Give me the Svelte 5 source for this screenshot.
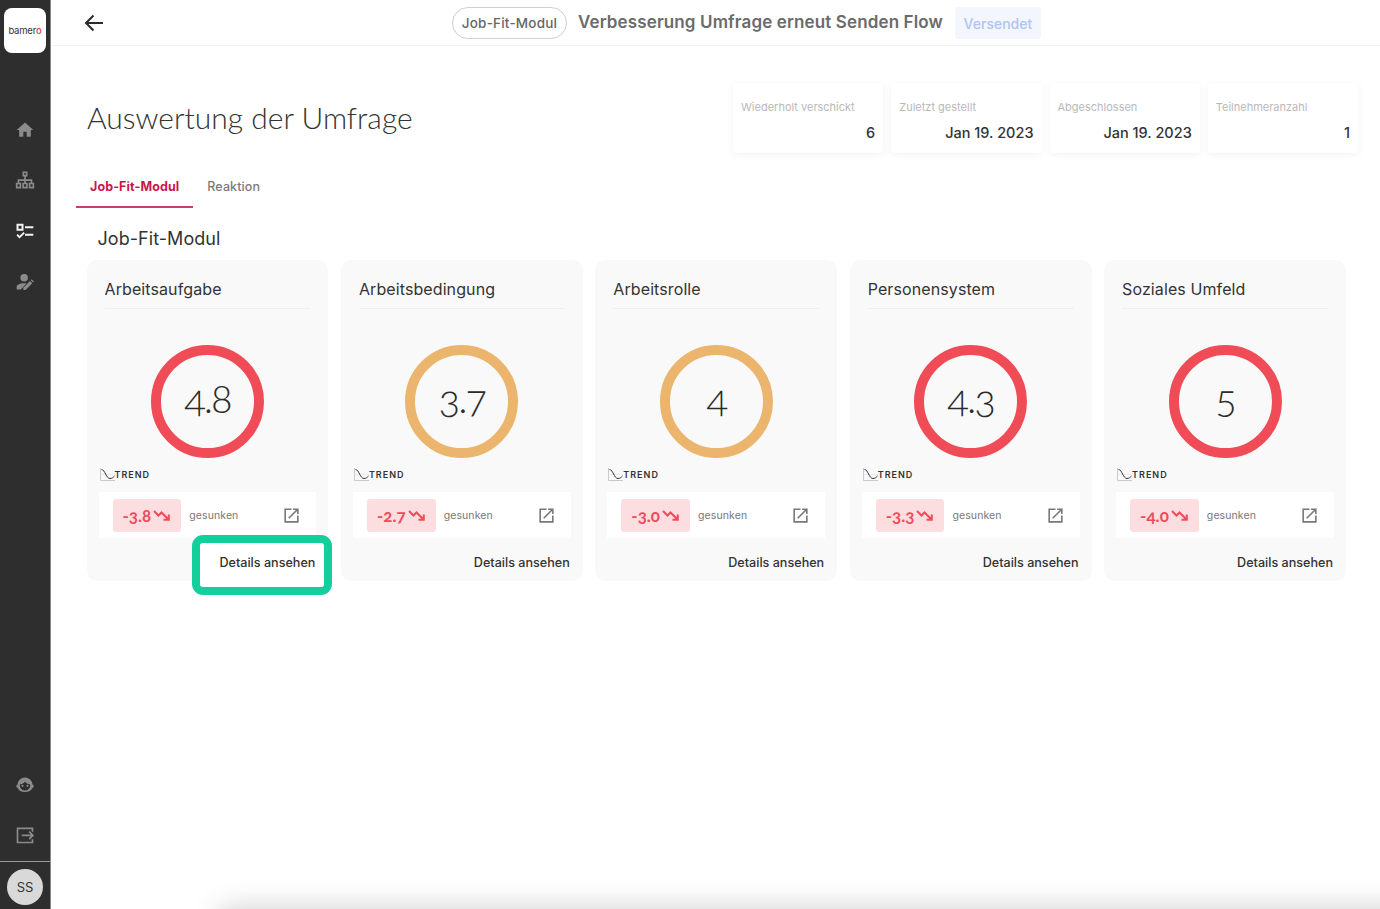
<script>
  const stats = [
    { label: 'Wiederholt verschickt', value: '6' },
    { label: 'Zuletzt gestellt', value: 'Jan 19. 2023' },
    { label: 'Abgeschlossen', value: 'Jan 19. 2023' },
    { label: 'Teilnehmeranzahl', value: '1' }
  ];
  const cards = [
    { title: 'Arbeitsaufgabe', score: '4.8', tone: 'red', delta: '-3.8' },
    { title: 'Arbeitsbedingung', score: '3.7', tone: 'amber', delta: '-2.7' },
    { title: 'Arbeitsrolle', score: '4', tone: 'amber', delta: '-3.0' },
    { title: 'Personensystem', score: '4.3', tone: 'red', delta: '-3.3' },
    { title: 'Soziales Umfeld', score: '5', tone: 'red', delta: '-4.0' }
  ];
</script>

<div class="app">
  <aside class="sidebar">
    <div class="logo"><span>bamer<b>o</b></span></div>
    <nav class="nav-top">
      <svg viewBox="0 0 24 24" class="ico"><path d="M10 20v-6h4v6h5v-8h3L12 3 2 12h3v8z" /></svg>
      <svg viewBox="0 0 24 24" class="ico">
        <path d="M10 1.500h4v4h-4zM2 15h4.500v5H2zM9.750 15h4.500v5h-4.500zM17.500 15H22v5h-4.500z" fill="none" stroke="currentColor" stroke-width="2" />
        <path d="M12 5.500V15M4.200 15v-4h15.600v4" fill="none" stroke="currentColor" stroke-width="2" />
      </svg>
      <svg viewBox="0 0 24 24" class="ico active">
        <rect x="3" y="4.500" width="6" height="6" fill="none" stroke="currentColor" stroke-width="2.400" />
        <path d="M12 7.500h10M12 16.500h10" fill="none" stroke="currentColor" stroke-width="2.200" />
        <path d="M2.500 16.500l3 3L11 14" fill="none" stroke="currentColor" stroke-width="2.200" />
      </svg>
      <svg viewBox="0 0 24 24" class="ico">
        <circle cx="11" cy="7" r="4.500" />
        <path d="M2 21v-3c0-3 4.500-4.500 9-4.500 .9 0 1.800 .1 2.700 .2L7 21z" />
        <path d="M10 21.500v-2.700l8-8 2.700 2.700-8 8zM19 9.800l1-1 2.700 2.700-1 1z" />
      </svg>
    </nav>
    <div class="nav-bottom">
      <svg viewBox="0 0 24 24" class="ico">
        <path fill-rule="evenodd" d="M12 3a9 9 0 0 1 9 8.500c1 .4 1.500 1 1.500 2s-.6 1.700-1.700 2c-1.300 3-4.300 5-8.800 5-4.700 0-7.700-2-9-5.200C2 15 1.500 14.400 1.500 13.500S2 12 3 11.500A9 9 0 0 1 12 3zm-6 8a6 6 0 0 0 0 3c1 3 3.300 4.500 6 4.500 3 0 5-1.500 6-4.500a6 6 0 0 0 0-3c-1.500 0-4-.5-6-3-2 2.500-4.500 3-6 3z" />
        <circle cx="9" cy="13" r="1.300" />
        <circle cx="15" cy="13" r="1.300" />
      </svg>
      <svg viewBox="0 0 24 24" class="ico">
        <path d="M21 8V4H3v17h18v-4" fill="none" stroke="currentColor" stroke-width="2" />
        <path d="M8 12.500h13M17 8l4.500 4.500L17 17" fill="none" stroke="currentColor" stroke-width="2" />
      </svg>
    </div>
    <div class="user"><span class="avatar">SS</span></div>
  </aside>

  <main class="main">
    <header class="topbar">
      <svg class="back" viewBox="0 0 20 18"><path d="M19 9H2M9.500 1.500 2 9l7.500 7.500" fill="none" stroke="#2b2b2b" stroke-width="2" /></svg>
      <div class="crumbs">
        <span class="pill">Job-Fit-Modul</span>
        <span class="flow">Verbesserung Umfrage erneut Senden Flow</span>
        <span class="badge">Versendet</span>
      </div>
    </header>

    <section class="head">
      <h1>Auswertung der Umfrage</h1>
      <div class="stats">
        {#each stats as s}
          <div class="stat">
            <div class="stat-label">{s.label}</div>
            <div class="stat-value">{s.value}</div>
          </div>
        {/each}
      </div>
    </section>

    <div class="tabs">
      <span class="tab on">Job-Fit-Modul</span>
      <span class="tab">Reaktion</span>
    </div>

    <h2>Job-Fit-Modul</h2>

    <div class="cards">
      {#each cards as c, i}
        <article class="card">
          <h3>{c.title}</h3>
          <div class="ring-wrap">
            <div class="ring {c.tone}">
              <span class="score">{c.score}</span>
            </div>
          </div>
          <div class="trend">
            <svg viewBox="0 0 15 13" width="15" height="13">
              <path d="M.5 0v12.500H15" fill="none" stroke="#c9c9c9" stroke-width="1" />
              <path d="M.5 6.500H15" fill="none" stroke="#dcdcdc" stroke-width="1" stroke-dasharray="1 1" />
              <path d="M1.500 1.500C5 1.500 6 10.500 10 10.500c2 0 3-1 4.500-2.500" fill="none" stroke="#333" stroke-width="1" />
            </svg>
            <span>TREND</span>
          </div>
          <div class="delta-row">
            <span class="chip">
              {c.delta}
              <svg viewBox="0 0 18 12" width="18" height="12">
                <path d="M1 2l4.500 4.500L8.500 3.500 15 10M15.800 5.500v5.300h-5.300" fill="none" stroke="#ef4b59" stroke-width="2" />
              </svg>
            </span>
            <span class="label">gesunken</span>
            <svg class="open" viewBox="0 0 24 24" width="19" height="19"><path d="M19 19H5V5h7V3H3v18h18v-9h-2zM14 3v2h3.590l-9.830 9.830 1.410 1.410L19 6.410V10h2V3z" /></svg>
          </div>
          <div class="foot">
            <a class="details" class:marked={i === 0} href="#details">Details ansehen</a>
          </div>
        </article>
      {/each}
    </div>
  </main>
  <div class="drawer"></div>
</div>

<style>
  :global(body) {
    margin: 0;
    background: #fff;
    overflow: hidden;
  }
  .app {
    display: flex;
    height: 909px;
    position: relative;
    overflow: hidden;
    font-family: Inter, "Liberation Sans", sans-serif;
    color: #333;
  }
  .sidebar {
    width: 50px;
    flex: none;
    background: #2e2e2e;
    border-right: 1px solid #8a8a8a;
    display: flex;
    flex-direction: column;
    align-items: center;
    box-sizing: content-box;
  }
  .logo {
    width: 42px;
    height: 45px;
    margin-top: 8px;
    background: #fff;
    border-radius: 8px;
    display: flex;
    align-items: center;
    justify-content: center;
    font-size: 9.500px;
    letter-spacing: -0.2px;
    color: #333;
  }
  .logo b {
    color: #e5336d;
    font-weight: 500;
  }
  .nav-top {
    display: flex;
    flex-direction: column;
    align-items: center;
    gap: 30.600px;
    margin-top: 67px;
  }
  .ico {
    width: 20px;
    height: 20px;
    fill: #8b8b8b;
    color: #8b8b8b;
    display: block;
  }
  .ico.active {
    color: #f2f2f2;
    fill: #f2f2f2;
  }
  .nav-bottom {
    margin-top: auto;
    display: flex;
    flex-direction: column;
    align-items: center;
    gap: 30px;
    padding-bottom: 16px;
  }
  .user {
    align-self: stretch;
    border-top: 1px solid #9a9a9a;
    height: 47px;
    display: flex;
    align-items: center;
    justify-content: center;
  }
  .avatar {
    width: 36px;
    height: 36px;
    margin-top: 2px;
    border-radius: 50%;
    background: #d9d9d9;
    color: #333;
    font-size: 13px;
    display: flex;
    align-items: center;
    justify-content: center;
  }
  .main {
    flex: 1;
    min-width: 0;
  }
  .topbar {
    height: 45px;
    border-bottom: 1px solid #f2f2f2;
    display: flex;
    align-items: center;
  }
  .back {
    width: 20px;
    height: 18px;
    margin-left: 33px;
  }
  .crumbs {
    display: flex;
    align-items: center;
    margin-left: 348px;
    margin-top: 1px;
  }
  .pill {
    box-sizing: border-box;
    width: 115px;
    height: 32px;
    border: 1px solid #cfcfcf;
    border-radius: 16px;
    font-size: 13.500px;
    letter-spacing: 0.2px;
    font-weight: 500;
    color: #666;
    display: flex;
    align-items: center;
    justify-content: center;
  }
  .flow {
    margin: -3px 0 0 11px;
    font-size: 17px;
    letter-spacing: 0.13px;
    font-weight: 600;
    color: #6b6b6b;
    white-space: nowrap;
  }
  .badge {
    box-sizing: border-box;
    margin-left: 12px;
    width: 86px;
    height: 32px;
    border-radius: 3px;
    background: #f3f6fd;
    color: #afc4f0;
    font-size: 14px;
    font-weight: 500;
    display: flex;
    align-items: center;
    justify-content: center;
  }
  .head {
    display: flex;
    justify-content: space-between;
    align-items: flex-start;
    padding: 37px 22px 0 36px;
    height: 53px;
  }
  h1 {
    margin: 16px 0 0;
    font-family: Lato, sans-serif;
    font-weight: 300;
    font-size: 30px;
    line-height: 36px;
    color: #333;
    white-space: nowrap;
  }
  .stats {
    display: flex;
    gap: 8px;
  }
  .stat {
    box-sizing: border-box;
    width: 150.250px;
    height: 70px;
    padding: 17px 8px 0;
    background: #fff;
    border-radius: 4px;
    box-shadow: 0 2px 8px rgba(0, 0, 0, 0.05);
  }
  .stat-label {
    font-size: 11px;
    line-height: 14px;
    color: #b9b9b9;
    white-space: nowrap;
  }
  .stat-value {
    margin-top: 10px;
    text-align: right;
    font-size: 14.500px;
    line-height: 18px;
    font-weight: 500;
    color: #333;
  }
  .tabs {
    display: flex;
    margin: 31px 0 0 25px;
    height: 41px;
  }
  .tab {
    padding: 0 14px;
    height: 39px;
    font-size: 12.500px;
    letter-spacing: 0.1px;
    line-height: 39px;
    font-weight: 500;
    color: #7a7a7a;
  }
  .tab.on {
    color: #c8174a;
    font-weight: 700;
    border-bottom: 2px solid #d23a66;
  }
  h2 {
    margin: 20px 0 0 46.500px;
    font-size: 18px;
    line-height: 22px;
    font-weight: 400;
    color: #333;
    letter-spacing: 0.05px;
  }
  .cards {
    display: grid;
    grid-template-columns: repeat(5, 1fr);
    gap: 12.500px;
    margin: 10px 34px 0 35.500px;
  }
  .card {
    box-sizing: border-box;
    height: 321px;
    background: #f9f9f9;
    border-radius: 10px;
    padding: 0 12px;
    display: flex;
    flex-direction: column;
  }
  h3 {
    margin: 0 6px;
    height: 49px;
    box-sizing: border-box;
    padding-top: 19px;
    border-bottom: 1px solid #efefef;
    font-size: 16px;
    line-height: 20px;
    font-weight: 400;
    letter-spacing: 0.1px;
    color: #333;
    white-space: nowrap;
  }
  .ring-wrap {
    display: flex;
    justify-content: center;
    margin-top: 36px;
  }
  .ring {
    box-sizing: border-box;
    width: 113px;
    height: 113px;
    padding-bottom: 7px;
    border-radius: 50%;
    border: 10px solid;
    display: flex;
    align-items: center;
    justify-content: center;
  }
  .ring.red {
    border-color: #ef4c58;
  }
  .ring.amber {
    border-color: #ecb56d;
  }
  .score {
    font-family: Lato, sans-serif;
    font-weight: 300;
    font-variant-numeric: oldstyle-nums;
    font-size: 40px;
    letter-spacing: -2px;
    color: #2b2b2b;
  }
  .trend {
    display: flex;
    align-items: center;
    margin: 10px 0 0 1px;
    height: 13px;
    font-size: 9px;
    font-weight: 600;
    letter-spacing: 1px;
    color: #333;
  }
  .delta-row {
    margin-top: 11px;
    height: 46px;
    background: #fff;
    display: flex;
    align-items: center;
    padding: 0 15px 0 14px;
  }
  .chip {
    height: 33px;
    padding: 0 10px;
    border-radius: 3px;
    background: #fcdde0;
    color: #ef4b59;
    font-family: Lato, sans-serif;
    font-variant-numeric: oldstyle-nums;
    font-size: 17px;
    font-weight: 700;
    display: flex;
    align-items: center;
    gap: 2px;
  }
  .label {
    margin-left: 8px;
    font-size: 10.500px;
    color: #777;
    letter-spacing: 0.1px;
  }
  .open {
    margin-left: auto;
    fill: #777;
  }
  .foot {
    display: flex;
    justify-content: flex-end;
    margin-top: 17px;
    padding-right: 1px;
  }
  .details {
    font-size: 12.600px;
    line-height: 16px;
    font-weight: 500;
    color: #333;
    text-decoration: none;
    position: relative;
    z-index: 1;
    isolation: isolate;
  }
  .details.marked::before {
    content: '';
    position: absolute;
    z-index: -1;
    top: -20px;
    bottom: -24px;
    left: -27px;
    right: -17px;
    background: #fff;
    border: 8px solid #14cf9c;
    border-radius: 11px;
  }
  .drawer {
    position: absolute;
    left: 220px;
    right: -40px;
    bottom: -40px;
    height: 40px;
    box-shadow: 0 0 30px rgba(0, 0, 0, 0.2);
  }
</style>
